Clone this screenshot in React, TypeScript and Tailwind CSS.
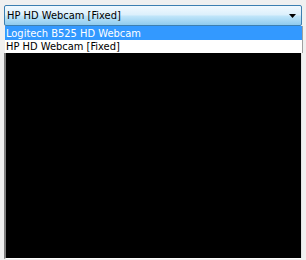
export default function App() {
  return (
    <div
      className="w-[306px] h-[260px] bg-[#f0f0f0] pt-[5px] pl-[4px] pr-[4px] flex flex-col"
      style={{ fontFamily: "Tahoma, 'DejaVu Sans Condensed', 'DejaVu Sans', sans-serif" }}
    >
      {/* combo box */}
      <div className="h-[21px] border border-[#3c7fb1] rounded-[2px] flex items-center justify-between pl-[2px] pr-[5px] bg-[linear-gradient(to_bottom,#f2f9fe_0%,#dcf0fc_45%,#bee4f9_55%,#8fcbee_100%)]">
        <span className="text-[11px] leading-none text-black">HP HD Webcam [Fixed]</span>
        <svg width="7" height="4" viewBox="0 0 7 4">
          <path d="M0 0h7L3.5 4z" fill="#000" />
        </svg>
      </div>
      {/* list */}
      <div className="relative flex flex-col flex-1 min-h-0">
        <div className="ml-[1px] mr-[-1px] bg-white border-r border-[#a0a0a0] flex flex-col text-[11px] leading-[13px]">
          <div className="h-[14px] bg-[#3399ff] text-white pl-[1px] pt-[1px]">Logitech B525 HD Webcam</div>
          <div className="h-[13px] text-black pl-[1px]">HP HD Webcam [Fixed]</div>
        </div>
        <div className="flex-1 bg-black border-l-2 border-[#808080] border-r border-r-[#e3e3e3] border-b border-b-[#ffffff] mb-[1px]" />
      </div>
    </div>
  );
}
